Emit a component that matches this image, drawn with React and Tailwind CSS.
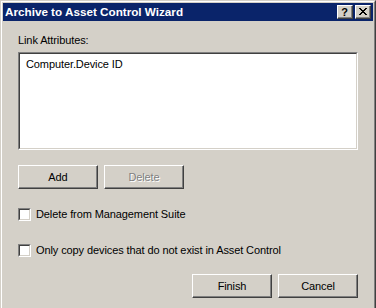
import React from "react";

const font = { fontFamily: '"Liberation Sans", Arial, sans-serif' };

function Button({ children, disabled, className = "" }) {
  return (
    <div
      className={`w-[80px] h-[24px] border border-t-white border-l-white border-r-[#404040] border-b-[#404040] shadow-[inset_-1px_-1px_0_#808080] bg-[#d4d0c8] flex items-center justify-center text-[11px] tracking-[-0.1px] ${className}`}
    >
      <span
        className={disabled ? "text-[#808080] [text-shadow:1px_1px_0_#ffffff]" : "text-black"}
      >
        {children}
      </span>
    </div>
  );
}

function Checkbox({ label }) {
  return (
    <div className="flex items-center h-[13px]">
      <div className="w-[13px] h-[13px] border border-t-[#808080] border-l-[#808080] border-r-white border-b-white">
        <div className="w-full h-full border border-t-[#404040] border-l-[#404040] border-r-[#d4d0c8] border-b-[#d4d0c8] bg-white" />
      </div>
      <span className="ml-[5px] text-[11px] leading-[13px] tracking-[-0.1px] text-black">{label}</span>
    </div>
  );
}

function TitleButton({ children }) {
  return (
    <div className="w-[16px] h-[14px] border border-t-white border-l-white border-r-[#404040] border-b-[#404040] shadow-[inset_-1px_-1px_0_#808080] bg-[#d4d0c8] flex items-center justify-center">
      {children}
    </div>
  );
}

function CloseGlyph() {
  const rows = [
    [0, 1, 6, 7],
    [1, 2, 5, 6],
    [2, 3, 4, 5],
    [3, 4],
    [2, 3, 4, 5],
    [1, 2, 5, 6],
    [0, 1, 6, 7],
  ];
  return (
    <svg width="8" height="7" viewBox="0 0 8 7" shapeRendering="crispEdges" className="mr-px mb-px">
      {rows.map((cols, y) =>
        cols.map((x) => <rect key={`${x}-${y}`} x={x} y={y} width="1" height="1" fill="#000" />)
      )}
    </svg>
  );
}

export default function App() {
  return (
    <div className="w-[376px] h-[308px] overflow-hidden bg-[#d4d0c8]" style={font}>
      <div className="h-[320px] border-t border-l border-r border-t-[#d4d0c8] border-l-[#d4d0c8] border-r-[#404040]">
        <div className="h-full border-t border-l border-r border-t-white border-l-white border-r-[#808080] pt-px px-px">
          {/* title bar */}
          <div className="h-[18px] bg-[#0a246a] flex items-center justify-between pl-[2px] pr-[2px]">
            <span className="text-white font-bold text-[11.7px] leading-[14px]">Archive to Asset Control Wizard</span>
            <div className="flex gap-[2px]">
              <TitleButton>
                <span className="text-black font-bold text-[11px] leading-[11px] mr-px">?</span>
              </TitleButton>
              <TitleButton>
                <CloseGlyph />
              </TitleButton>
            </div>
          </div>
          {/* content */}
          <div className="px-[15px] flex flex-col">
            <div className="mt-[13px] text-[11px] leading-[13px] tracking-[-0.1px] text-black">Link Attributes:</div>
            <div className="mt-[5px] h-[98px] border border-t-[#808080] border-l-[#808080] border-r-white border-b-white">
              <div className="h-full border border-t-[#404040] border-l-[#404040] border-r-[#d4d0c8] border-b-[#d4d0c8] bg-white pl-[6px] pt-[4px]">
                <div className="text-[11px] leading-[13px] tracking-[-0.1px] text-black">Computer.Device ID</div>
              </div>
            </div>
            <div className="mt-[15px] flex gap-[6px]">
              <Button>Add</Button>
              <Button disabled>Delete</Button>
            </div>
            <div className="mt-[19px]">
              <Checkbox label="Delete from Management Suite" />
            </div>
            <div className="mt-[23px]">
              <Checkbox label="Only copy devices that do not exist in Asset Control" />
            </div>
            <div className="mt-[17px] flex justify-end gap-[6px]">
              <Button>Finish</Button>
              <Button>Cancel</Button>
            </div>
          </div>
        </div>
      </div>
    </div>
  );
}
